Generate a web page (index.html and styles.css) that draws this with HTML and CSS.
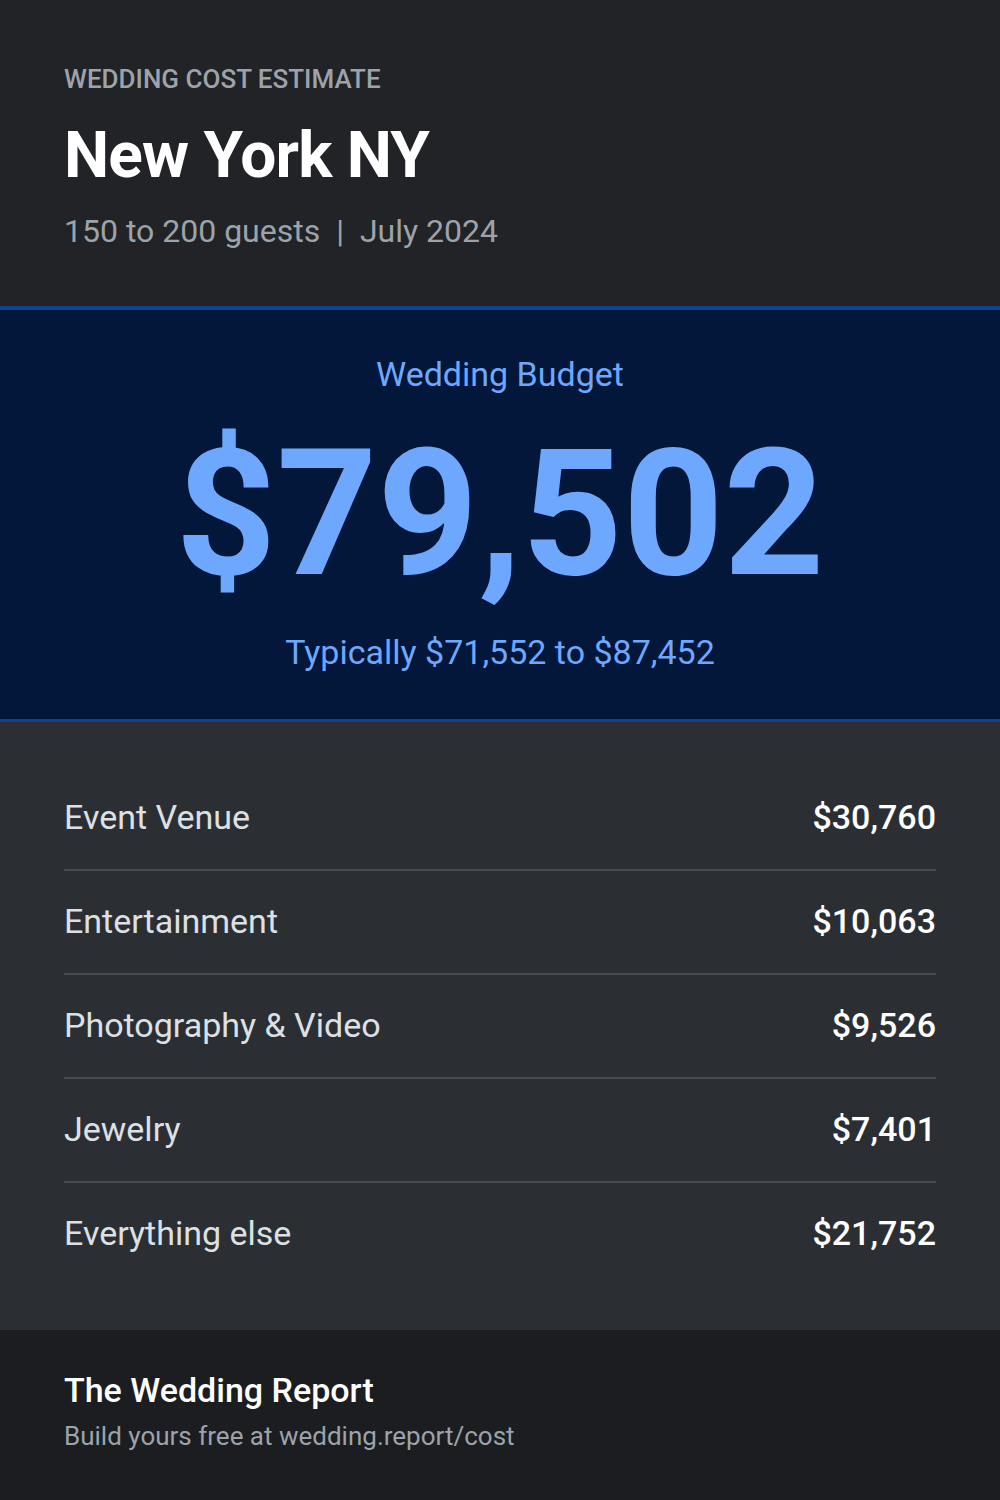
FILE: index.html
```html
<!DOCTYPE html>
<html lang="en">
<head>
    <meta charset="UTF-8">
    <meta name="viewport" content="width=device-width, initial-scale=1.0">
    <title>Wedding Cost Estimate</title>
    <link rel="stylesheet" href="styles.css">
</head>
<body>
    <div class="card">
        <header class="head">
            <div class="eyebrow">Wedding Cost Estimate</div>
            <h1>New York NY</h1>
            <div class="meta">150 to 200 guests <span class="sep">|</span> July 2024</div>
        </header>

        <section class="budget">
            <div class="budget-label">Wedding Budget</div>
            <div class="budget-total">$79,502</div>
            <div class="budget-range">Typically $71,552 to $87,452</div>
        </section>

        <section class="items">
            <div class="item">
                <span class="item-name">Event Venue</span>
                <span class="item-cost">$30,760</span>
            </div>
            <div class="item">
                <span class="item-name">Entertainment</span>
                <span class="item-cost">$10,063</span>
            </div>
            <div class="item">
                <span class="item-name">Photography &amp; Video</span>
                <span class="item-cost">$9,526</span>
            </div>
            <div class="item">
                <span class="item-name">Jewelry</span>
                <span class="item-cost">$7,401</span>
            </div>
            <div class="item">
                <span class="item-name">Everything else</span>
                <span class="item-cost">$21,752</span>
            </div>
        </section>

        <footer class="foot">
            <div class="brand">The Wedding Report</div>
            <div class="cta">Build yours free at wedding.report/cost</div>
        </footer>
    </div>
</body>
</html>
```

FILE: styles.css
```css
body {
    margin: 0;
    font-family: Roboto, "Liberation Sans", sans-serif;
    background-color: #1b1d20;
}
.card {
    width: 1000px;
    height: 1500px;
    display: flex;
    flex-direction: column;
}
.head {
    background-color: #212327;
    padding: 63px 64px 55px;
}
.eyebrow {
    font-size: 26px;
    line-height: 32px;
    font-weight: 500;
    text-transform: uppercase;
    color: #9ca3ab;
}
.head h1 {
    margin: 25px 0 19px;
    font-size: 64px;
    line-height: 72px;
    font-weight: 700;
    letter-spacing: -0.8px;
    color: #ffffff;
}
.meta {
    font-size: 32px;
    line-height: 40px;
    color: #9ca3ab;
}
.sep {
    margin: 0 8px;
}
.budget {
    background-color: #02173a;
    border-top: 4px solid #0d4299;
    border-bottom: 3px solid #0d4299;
    height: 409px;
    display: flex;
    flex-direction: column;
    align-items: center;
}
.budget-label {
    margin-top: 44px;
    font-size: 34px;
    line-height: 40px;
    color: #6ea8fe;
}
.budget-total {
    margin-top: 25px;
    font-size: 176px;
    line-height: 190px;
    font-weight: 700;
    color: #6ea8fe;
}
.budget-range {
    margin-top: 23px;
    font-size: 34px;
    line-height: 40px;
    color: #6ea8fe;
}
.items {
    flex: 1;
    background-color: #2b2f34;
    padding: 44px 64px;
}
.item {
    display: flex;
    justify-content: space-between;
    align-items: center;
    padding: 31px 0 32px;
    line-height: 40px;
    font-size: 34px;
    border-bottom: 2px solid #474b52;
}
.item + .item {
    padding-top: 30px;
}
.item:last-child {
    border-bottom: none;
}
.item-name {
    color: #dde0e4;
}
.item-cost {
    color: #ffffff;
    font-weight: 500;
}
.foot {
    background-color: #1b1d20;
    height: 170px;
    box-sizing: border-box;
    padding: 40px 64px 0;
}
.brand {
    font-size: 34px;
    line-height: 40px;
    font-weight: 500;
    color: #ffffff;
}
.cta {
    margin-top: 10px;
    font-size: 26px;
    line-height: 32px;
    color: #9ca3ab;
}
```
